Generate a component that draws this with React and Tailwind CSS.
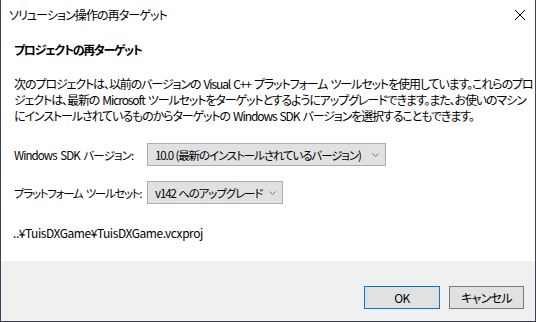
import React from 'react';

const Chevron = () => (
  <svg width="7" height="4" viewBox="0 0 7 4" className="shrink-0">
    <polyline points="0.5,0.5 3.5,3.5 6.5,0.5" fill="none" stroke="#707070" strokeWidth="1" />
  </svg>
);

const Dropdown = ({ value, width }) => (
  <div className={`${width} h-[23px] flex items-center justify-between pl-[7px] pr-[6px] border border-[#adadad] bg-[#e1e1e1]`}>
    <span className="whitespace-nowrap text-[11.5px] tracking-[-1.1px] [word-spacing:1px]">{value}</span>
    <Chevron />
  </div>
);

const App = () => {
  return (
    <div className="w-[536px] h-[322px] flex flex-col bg-white border-x border-b border-[#3c4454] text-[12px] leading-[16px] tracking-[-0.7px] text-black font-['Noto_Sans_CJK_JP',sans-serif] [font-feature-settings:'palt']">
      {/* title bar */}
      <div className="h-[30px] flex items-center justify-between pl-[8px] pr-[10px]">
        <span className="tracking-[-0.9px]">ソリューション操作の再ターゲット</span>
        <svg width="10" height="10" viewBox="0 0 10 10">
          <path d="M0 0L10 10M10 0L0 10" stroke="#000" strokeWidth="1" />
        </svg>
      </div>

      <div className="flex-1 px-[13px]">
        <h2 className="mt-[12px] font-bold tracking-[-1.3px]">プロジェクトの再ターゲット</h2>
        <p className="mt-[18px] whitespace-nowrap tracking-[-1.1px] [word-spacing:1.5px]">
          次のプロジェクトは、以前のバージョンの Visual C++ プラットフォーム ツールセットを使用しています。これらのプロ<br />
          ジェクトは、最新の Microsoft ツールセットをターゲットとするようにアップグレードできます。また、お使いのマシン<br />
          にインストールされているものからターゲットの Windows SDK バージョンを選択することもできます。
        </p>

        <div className="mt-[19px] flex items-center">
          <span className="w-[133px] whitespace-nowrap text-[11.5px] tracking-[-0.9px] [word-spacing:2px]">Windows SDK バージョン:</span>
          <Dropdown value="10.0 (最新のインストールされているバージョン)" width="w-[239px]" />
        </div>
        <div className="mt-[15px] flex items-center">
          <span className="w-[133px] whitespace-nowrap text-[11.5px] tracking-[-1.3px] [word-spacing:2px]">プラットフォーム ツールセット:</span>
          <Dropdown value="v142 へのアップグレード" width="w-[136px]" />
        </div>

        <div className="mt-[21px] -ml-[1px] tracking-[-0.45px]">..¥TuisDXGame¥TuisDXGame.vcxproj</div>
      </div>

      {/* footer */}
      <div className="h-[60px] bg-[#f0f0f0] flex justify-end items-start pt-[25px] pr-[11px] gap-[9px]">
        <button className="w-[76px] h-[23px] border border-[#0078d7] bg-[#e1e1e1]">OK</button>
        <button className="w-[75px] h-[23px] border border-[#7a7a7a] bg-[#e1e1e1]">キャンセル</button>
      </div>
    </div>
  );
};

export default App;
